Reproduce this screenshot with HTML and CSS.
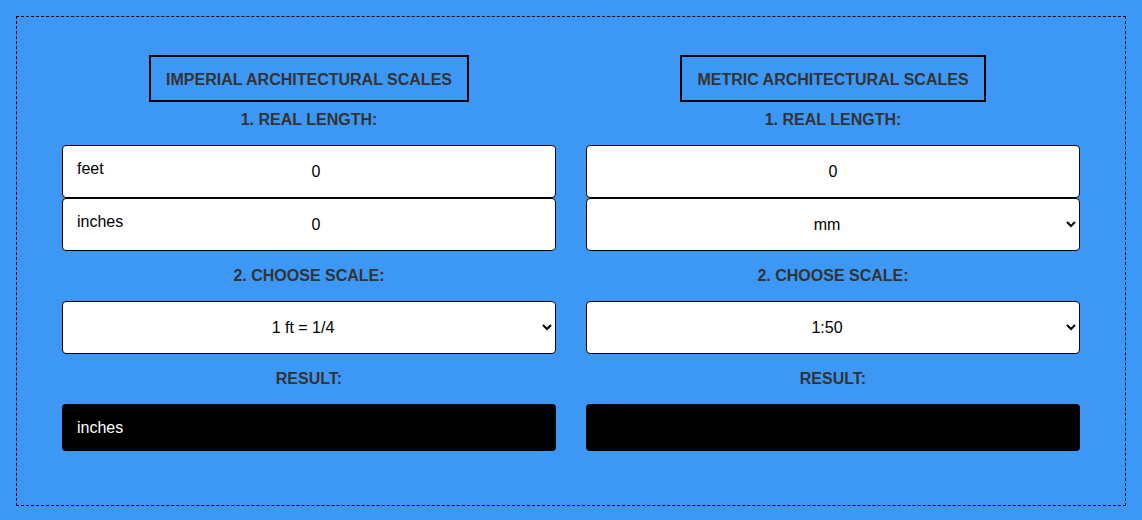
FILE: index.html
```html
<!DOCTYPE html>
<html lang="en">
<head>
  <meta charset="UTF-8" />
  <meta name="viewport" content="width=device-width, initial-scale=1.0" />
  <title>Architectural Scales</title>
  <link rel="stylesheet" href="styles.css">
</head>
<body>

  <div class="wrapper">

    <!-- Imperial -->
    <section class="calc">
      <h2 class="calc-title">Imperial Architectural Scales</h2>
      <p class="step first">1. Real length:</p>
      <div class="field">
        <label for="feet">feet</label>
        <input type="text" id="feet" value="0">
      </div>
      <div class="field">
        <label for="inches">inches</label>
        <input type="text" id="inches" value="0">
      </div>
      <p class="step">2. Choose scale:</p>
      <select class="box-select">
        <option>1 ft = 1/4</option>
        <option>1 ft = 1/8</option>
        <option>1 ft = 1/2</option>
      </select>
      <p class="step">Result:</p>
      <div class="result">inches</div>
    </section>

    <!-- Metric -->
    <section class="calc">
      <h2 class="calc-title">Metric Architectural Scales</h2>
      <p class="step first">1. Real length:</p>
      <div class="field">
        <input type="text" class="plain" value="0">
      </div>
      <select class="box-select">
        <option>mm</option>
        <option>cm</option>
        <option>m</option>
      </select>
      <p class="step">2. Choose scale:</p>
      <select class="box-select">
        <option>1:50</option>
        <option>1:100</option>
        <option>1:200</option>
      </select>
      <p class="step">Result:</p>
      <div class="result"></div>
    </section>

  </div>

</body>
</html>
```

FILE: styles.css
```css
body {
  margin: 0;
  padding: 16px;
  background-color: #3d98f5;
  font-family: 'Liberation Sans', Arial, sans-serif;
}

.wrapper {
  border: 1px dashed #000;
  box-sizing: border-box;
  height: 490px;
  padding: 38px 45px 0;
  display: grid;
  grid-template-columns: 1fr 1fr;
  column-gap: 30px;
  align-items: start;
}

.calc {
  display: flex;
  flex-direction: column;
  align-items: center;
}

.calc-title {
  margin: 0;
  border: 2px solid #000;
  padding: 14px 15px 12px;
  font-size: 16px;
  line-height: 17px;
  font-weight: bold;
  text-transform: uppercase;
  color: #333;
}

.step {
  margin: 16px 0 16px;
  font-size: 16px;
  line-height: 18px;
  font-weight: bold;
  text-transform: uppercase;
  color: #333;
}

.step.first {
  margin-top: 9px;
}

.field {
  position: relative;
  width: 100%;
}

.field label {
  position: absolute;
  left: 15px;
  top: 15px;
  font-size: 16px;
  color: #000;
}

.field input {
  display: block;
  box-sizing: border-box;
  width: 100%;
  height: 53px;
  border: 1px solid #000;
  border-radius: 4px;
  background: #fff;
  padding: 0 0 0 14px;
  font-family: inherit;
  font-size: 16px;
  color: #000;
  text-align: center;
}

.field input.plain {
  padding: 0;
}

.box-select {
  box-sizing: border-box;
  width: 100%;
  height: 53px;
  border: 1px solid #000;
  border-radius: 4px;
  background-color: #fff;
  font-family: inherit;
  font-size: 16px;
  color: #000;
  text-align: center;
  text-align-last: center;
}

.result {
  box-sizing: border-box;
  width: 100%;
  height: 47px;
  background-color: #000;
  border-radius: 4px;
  padding: 0 15px;
  line-height: 47px;
  font-size: 16px;
  color: #fff;
}
```
